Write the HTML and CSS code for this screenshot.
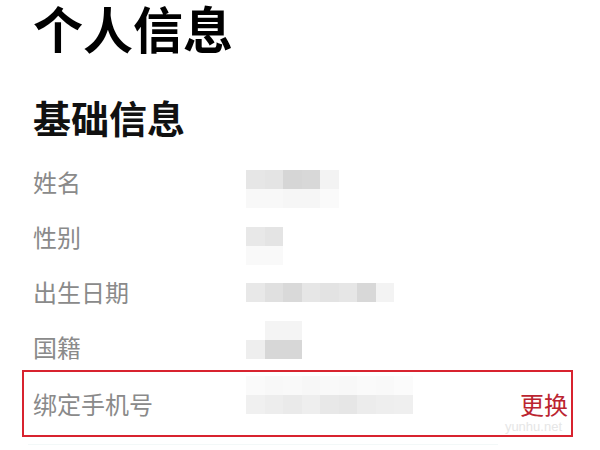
FILE: index.html
```html
<!DOCTYPE html>
<html lang="zh-CN">
<head>
<meta charset="utf-8">
<title>个人信息</title>
<link rel="stylesheet" href="styles.css">
</head>
<body>
<main class="page">
  <h1 class="title">个人信息</h1>
  <h2 class="subtitle">基础信息</h2>
  <div class="rows">
    <div class="row">
      <span class="label">姓名</span>
      <div class="mosaic c5 off-name">
        <i class="e6"></i><i class="e4"></i><i class="d6"></i><i class="d8"></i><i class="f3"></i>
        <i class="f8"></i><i class="f8"></i><i class="f6"></i><i class="f6"></i><i class="fa"></i>
      </div>
    </div>
    <div class="row">
      <span class="label">性别</span>
      <div class="mosaic c2 off-gender">
        <i class="e8"></i><i class="e4"></i>
        <i class="f9"></i><i class="f9"></i>
      </div>
    </div>
    <div class="row">
      <span class="label">出生日期</span>
      <div class="mosaic c8 off-birth">
        <i class="e8"></i><i class="e0"></i><i class="d9"></i><i class="e6"></i><i class="e3"></i><i class="e6"></i><i class="d8"></i><i class="f3"></i>
      </div>
    </div>
    <div class="row">
      <span class="label">国籍</span>
      <div class="mosaic c3 off-nation">
        <i class="ff"></i><i class="f4"></i><i class="f4"></i>
        <i class="ee"></i><i class="d7"></i><i class="d7"></i>
      </div>
    </div>
    <div class="row row-highlight">
      <span class="label">绑定手机号</span>
      <div class="mosaic c9 off-phone">
        <i class="fa"></i><i class="f8"></i><i class="f9"></i><i class="f7"></i><i class="f9"></i><i class="f8"></i><i class="fa"></i><i class="f9"></i><i class="fb"></i>
        <i class="f0"></i><i class="ed"></i><i class="ea"></i><i class="ee"></i><i class="e8"></i><i class="e6"></i><i class="ec"></i><i class="ee"></i><i class="ef"></i>
      </div>
      <span class="action">更换</span>
      <span class="watermark">yunhu.net</span>
    </div>
    <div class="divider"></div>
  </div>
</main>
</body>
</html>
```

FILE: styles.css
```css
html, body {
  margin: 0;
  padding: 0;
  background: #ffffff;
}

body {
  font-family: "Noto Sans CJK SC", "Noto Sans", sans-serif;
  width: 600px;
  height: 450px;
  overflow: hidden;
}

.page {
  padding-left: 33px;
  padding-right: 27px;
}

.title {
  margin: 0;
  padding-top: 1px;
  font-size: 50px;
  line-height: 52px;
  font-weight: 700;
  color: #000;
}

.subtitle {
  margin: 45px 0 0;
  font-size: 38px;
  line-height: 38px;
  font-weight: 700;
  color: #111;
}

.rows {
  margin-top: 18px;
  display: flex;
  flex-direction: column;
}

.row {
  position: relative;
  display: flex;
  align-items: center;
  height: 55px;
}

.label {
  width: 213px;
  flex: none;
  font-size: 24px;
  line-height: 30px;
  color: #8a8a8a;
}

.mosaic {
  display: grid;
  grid-auto-rows: 19px;
  align-self: flex-start;
}

.c2 { grid-template-columns: repeat(2, 18.5px); }
.c3 { grid-template-columns: repeat(3, 18.5px); }
.c5 { grid-template-columns: repeat(5, 18.5px); }
.c8 { grid-template-columns: repeat(8, 18.5px); }
.c9 { grid-template-columns: repeat(9, 18.5px); }

.off-name { margin-top: 16px; }
.off-gender { margin-top: 18px; }
.off-birth { margin-top: 19px; }
.off-nation { margin-top: 2px; }
.off-phone { margin-top: 4px; }

.mosaic i { display: block; }
.ff { background: #ffffff; }
.fb { background: #fbfbfb; }
.fa { background: #fafafa; }
.f9 { background: #f9f9f9; }
.f8 { background: #f8f8f8; }
.f7 { background: #f7f7f7; }
.f6 { background: #f6f6f6; }
.f4 { background: #f4f4f4; }
.f3 { background: #f3f3f3; }
.f0 { background: #f0f0f0; }
.ef { background: #efefef; }
.ee { background: #eeeeee; }
.ed { background: #ededed; }
.ec { background: #ececec; }
.ea { background: #eaeaea; }
.e8 { background: #e8e8e8; }
.e6 { background: #e6e6e6; }
.e4 { background: #e4e4e4; }
.e3 { background: #e3e3e3; }
.e0 { background: #e0e0e0; }
.d9 { background: #d9d9d9; }
.d8 { background: #d8d8d8; }
.d7 { background: #d7d7d7; }
.d6 { background: #d6d6d6; }

.row-highlight {
  box-sizing: border-box;
  height: 67px;
  width: 551px;
  margin: -4px 0 0 -11px;
  padding: 0 3px 0 9px;
  border: 2px solid #d8232f;
}

.action {
  margin-left: auto;
  font-size: 24px;
  line-height: 30px;
  color: #bb2430;
}

.watermark {
  position: absolute;
  right: 9px;
  bottom: 2px;
  font-family: "Liberation Sans", sans-serif;
  font-size: 13px;
  line-height: 13px;
  color: #e6e6e6;
}

.divider {
  margin: 7px 0 0 -5px;
  width: 470px;
  border-top: 1px solid #f3f8f8;
}
```
